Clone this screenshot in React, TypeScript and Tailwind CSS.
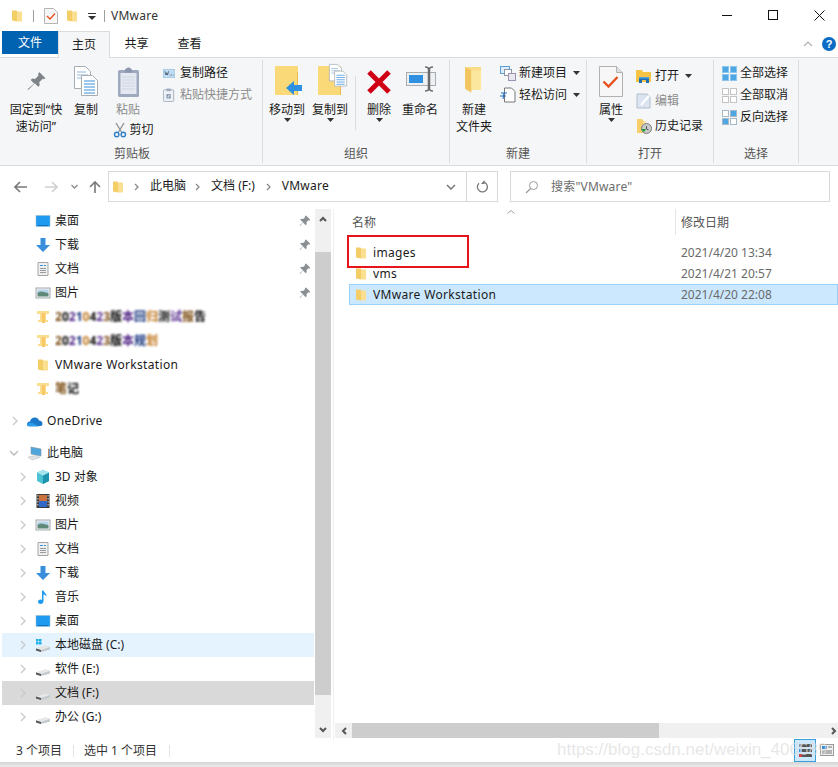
import React from "react";

const Sm = ({ children, w = 16, h = 16, vb, className = "" }: { children: React.ReactNode; w?: number; h?: number; vb?: string; className?: string }) => (
  <svg width={w} height={h} viewBox={vb ?? `0 0 ${w} ${h}`} className={"shrink-0 " + className}>{children}</svg>
);

const Folder = () => (
  <Sm>
    <path d="M3 2.500h4.500l.8 1.300V13.500L3 12.500z" fill="#f3cd66" />
    <path d="M8 3.500h5v10H8z" fill="#fadf90" />
  </Sm>
);
const PinFolder = () => (
  <Sm>
    <path d="M2 2h12v3h-3v6h2v2H3v-2h2V5H2z" fill="#fcdc8e" />
    <path d="M7 4h3v10H7z" fill="#f6c964" />
  </Sm>
);
const Desktop = () => (
  <Sm>
    <rect x="1" y="2.500" width="14" height="11" fill="#1e9bf0" stroke="#9ab9cc" strokeWidth=".5" />
    <path d="M3 12h10v1H3z" fill="#0d6fb8" />
  </Sm>
);
const Down = () => (
  <Sm>
    <path d="M5.500 1h5v7H15l-7 7-7-7h4.500z" fill="#3a8fdc" />
  </Sm>
);
const Doc = () => (
  <Sm>
    <path d="M3 1.500h10v13H3z" fill="#eef0f2" stroke="#a6a6a6" />
    <path d="M5 4h3v1H5zM9 4h2v1H9z" fill="#3a8fdc" />
    <path d="M5 7h6v1H5zM5 9h6v1H5zM5 11h6v1H5z" fill="#9a9a9a" />
  </Sm>
);
const Pic = () => (
  <Sm>
    <rect x="1" y="3" width="14" height="10" fill="#f1f3f5" stroke="#a4a8ad" />
    <path d="M2.500 4.500h11v3h-11z" fill="#b6d3ea" />
    <path d="M2.500 7.500l4-1 7 1.500v3.500h-11z" fill="#5f8a78" />
  </Sm>
);
const Cloud = () => (
  <Sm w={17} h={16}>
    <path d="M1 11.500c0-2 1.300-3 3-3 .6-2.500 2.500-4 4.800-4 2 0 3.600 1.300 4.200 3 2 0 3.500 1.500 3.500 3.200 0 1.300-.8 2.300-2 2.300H3c-1.300 0-2-.9-2-2z" fill="#1a78c8" />
    <path d="M1 11.500c.5-1 3-2 6-1.500l6 3.500H3c-1.300 0-2-.9-2-2z" fill="#2a9be8" />
  </Sm>
);
const PC = () => (
  <Sm w={17} h={16}>
    <path d="M5 2l10 2v7L5 9z" fill="#4fa6dc" stroke="#7d94a6" strokeWidth=".6" />
    <path d="M2 12l8-1.500 4 2L6 15z" fill="#dfe3e6" stroke="#b5b9bc" strokeWidth=".5" />
  </Sm>
);
const Cube = () => (
  <Sm>
    <path d="M8 1l6 2.500v8.500l-6 3-6-3V3.500z" fill="#4cc2d2" />
    <path d="M8 6.500l6-3v8.500l-6 3z" fill="#1d93ad" />
    <path d="M8 1l6 2.500-6 3-6-3z" fill="#a5e6ec" />
  </Sm>
);
const Film = () => (
  <Sm>
    <rect x="1.500" y="1" width="13" height="14" fill="#3a3a3a" />
    <path d="M4 2h8v6H4z" fill="#c9723f" />
    <path d="M4 8h8v6H4z" fill="#3068c8" />
    <path d="M2.500 2h.8v1.500h-.8zM2.500 5h.8v1.500h-.8zM2.500 8h.8v1.500h-.8zM2.500 11h.8v1.500h-.8zM12.700 2h.8v1.500h-.8zM12.700 5h.8v1.500h-.8zM12.700 8h.8v1.500h-.8zM12.700 11h.8v1.500h-.8z" fill="#fff" />
  </Sm>
);
const Note = () => (
  <Sm>
    <path d="M7 1.500h1.500c.3 2 3.500 3 3 6.500-.5-1.500-1.500-2.300-3-2.500V12c0 1.700-1.300 3-3 3S3 14 3 12.800c0-1.400 1.300-2.300 2.500-2.300.6 0 1.100.1 1.500.4z" fill="#1d9bf0" />
  </Sm>
);
const Drive = ({ win }: { win?: boolean }) => (
  <Sm>
    {win && <path d="M1 2h2.500v2.500H1zM4 2h2.500v2.500H4zM1 5h2.500v2.500H1zM4 5h2.500v2.500H4z" fill="#18aee8" />}
    <path d="M1 11.500l9.500-3 4.500 1.500v2.500L6 15l-5-1.500z" fill="#c5c8ca" />
    <path d="M1 11.500l9.500-3 4.500 1.500L6 13z" fill="#e6e8ea" />
    <path d="M1 11.500L6 13v2l-5-1.500z" fill="#555" />
  </Sm>
);
const Pin = () => (
  <svg width="12" height="12" viewBox="0 0 12 12" className="shrink-0">
    <path d="M7 .5l4.500 4.500-1.200.6-.8-.3-2 2 .2 2-1 1L4 7.600 1 11l-.5-.5L4 7.300 1.200 4.700l1-1 2 .2 2-2-.3-.8z" fill="#8a8f94" />
  </svg>
);
const Chevron = ({ open }: { open?: boolean }) => (
  <svg width="8" height="10" viewBox="0 0 8 10" className="shrink-0">
    {open ? <path d="M0 3l4 4 4-4" fill="none" stroke="#b9b9b9" strokeWidth="1.300" /> : <path d="M2 1l4 4-4 4" fill="none" stroke="#c9c9c9" strokeWidth="1.300" />}
  </svg>
);

const mosaic = ["text-[#7a4a10]", "text-[#000]", "text-[#4b1d80]", "text-[#12307a]", "text-[#c07820]", "text-[#111]", "text-[#5b2f90]"];
const Blurred = ({ text }: { text: string }) => (
  <span className="blur-[0.8px] font-bold">
    {text.split("").map((c, i) => (
      <span key={i} className={mosaic[i % mosaic.length]}>{c}</span>
    ))}
  </span>
);

type Row = { icon: React.ReactNode; label: React.ReactNode; pin?: boolean; bg?: string };

const NavRow = ({ icon, label, pin, bg = "", chev, mb = "" }: Row & { chev?: boolean; mb?: string }) => (
  <div className={"h-6 flex items-center pl-[17px] pr-[3px] " + bg + " " + mb}>
    <span className="w-[16px] shrink-0 flex">{chev && <Chevron />}</span>
    <span className="mr-[4px] flex">{icon}</span>
    <span className="flex-1 truncate">{label}</span>
    {pin && <Pin />}
  </div>
);

const Caret = ({ className = "" }: { className?: string }) => (
  <svg width="7" height="4" viewBox="0 0 7 4" className={"shrink-0 " + className}><path d="M0 0h7L3.500 4z" fill="#333" /></svg>
);

const Large = ({ icon, label, dim, caret, w }: { icon: React.ReactNode; label: React.ReactNode; dim?: boolean; caret?: boolean; w: string }) => (
  <div className={"flex flex-col items-center shrink-0 " + w}>
    <div className="h-[34px] flex items-start justify-center">{icon}</div>
    <div className={"text-center leading-[17px] whitespace-pre-line mt-[1px] " + (dim ? "text-[#8c8c8c]" : "")}>{label}</div>
    {caret && <Caret />}
  </div>
);

const Small = ({ icon, label, dim, caret }: { icon: React.ReactNode; label: string; dim?: boolean; caret?: boolean }) => (
  <div className="flex items-center h-[22px] whitespace-nowrap">
    <span className="w-[16px] flex justify-center mr-[3px]">{icon}</span>
    <span className={dim ? "text-[#8c8c8c]" : ""}>{label}</span>
    {caret && <Caret className="ml-[6px]" />}
  </div>
);

const Group = ({ w, label, children }: { w: string; label: string; children: React.ReactNode }) => (
  <div className={"flex flex-col shrink-0 border-r border-[#dcdddf] mt-[2px] h-[103px] " + w}>
    <div className="flex-1 flex pt-[6px] min-h-0">{children}</div>
    <div className="h-[20px] leading-[22px] text-center text-[#555]">{label}</div>
  </div>
);

const PinBig = () => (
  <svg width="21" height="22" viewBox="0 0 30 32">
    <path d="M19 3l9 9-2.500 1.500-1.500-.7-5 5 .7 4.200-2.200 2.200-5-5L3 29l-1-1 9.500-8.500-5-5 2.200-2.200 4.200.7 5-5-.7-1.500z" fill="#7f8488" />
  </svg>
);
const Pages = () => (
  <g>
    <path d="M.5.500h11l5 5v17H.5z" fill="#fff" stroke="#a8adb2" />
    <path d="M3 6h9M3 9h11M3 12h5" stroke="#8fb4dc" />
    <path d="M7.500 9.500h11l5 5v15h-16z" fill="#fff" stroke="#a8adb2" />
    <path d="M10 15h11M10 18h11M10 21h11M10 24h11M10 27h11" stroke="#3a8fdc" />
  </g>
);
const CopyBig = () => <svg width="25" height="31" viewBox="0 0 25 31"><Pages /></svg>;
const PasteBig = () => (
  <svg width="24" height="32" viewBox="0 0 24 32">
    <rect x="1" y="4" width="21" height="27" rx="1.500" fill="#9ea9bf" />
    <rect x="3.500" y="7" width="16" height="21" fill="#e4e9f1" />
    <path d="M5 11h13M5 14h13M5 17h13M5 20h13M5 23h13" stroke="#cfd6e2" />
    <path d="M8 4c0-1 1-1.500 1.500-1.500C10 1 13 1 13.500 2.500 14 2.500 15 3 15 4v2.500H8z" fill="#8b97ae" />
  </svg>
);
const Scissors = () => (
  <svg width="14" height="16" viewBox="0 0 14 16">
    <path d="M3 1l5.500 9M11 1L5.500 10" stroke="#8a8f94" strokeWidth="1.300" fill="none" />
    <circle cx="3.700" cy="12.500" r="2.200" fill="none" stroke="#2f7fc9" strokeWidth="1.400" />
    <circle cx="10.300" cy="12.500" r="2.200" fill="none" stroke="#2f7fc9" strokeWidth="1.400" />
  </svg>
);
const CopyPath = () => (
  <svg width="14" height="9" viewBox="0 0 16 12">
    <rect x=".5" y=".5" width="15" height="11" fill="#bfdcf3" stroke="#a0c4e0" />
    <path d="M2.500 3l1.500 5 1-3 1 3 1.500-5" fill="none" stroke="#3a4a5a" strokeWidth="1" />
    <path d="M9 8h1M11 8h1M13 8h1" stroke="#3a4a5a" />
  </svg>
);
const PasteShort = () => (
  <svg width="12" height="14" viewBox="0 0 14 16">
    <rect x=".5" y="2" width="12" height="13.500" rx="1" fill="#eef1f5" stroke="#9ea9bf" />
    <rect x="4" y=".5" width="5" height="3" fill="#9ea9bf" />
    <path d="M4 7h5v5H4z" fill="#7f93ad" />
    <path d="M6 11V9h2" stroke="#fff" fill="none" />
  </svg>
);
const BigFolder = ({ children }: { children?: React.ReactNode }) => (
  <svg width="24" height="30" viewBox="0 0 24 30" className="overflow-visible">
    <rect x="0" y="0" width="23" height="29" rx="1" fill="#f9d978" />
    <path d="M22 6h1v23h-1z" fill="#e8b94d" />
    {children}
  </svg>
);
const Del = () => (
  <svg width="26" height="26" viewBox="0 0 26 26">
    <path d="M3 3l20 20M23 3L3 23" stroke="#d00014" strokeWidth="5" />
  </svg>
);
const Rename = () => (
  <svg width="32" height="30" viewBox="0 0 32 30">
    <rect x=".5" y="8.500" width="29" height="13" fill="#eef1f3" stroke="#a8acb0" />
    <rect x="3" y="11" width="14" height="8" fill="#2f8fe0" />
    <path d="M19 3c2 0 3.500 0 3.500 2v20c0 2-1.500 2-3.500 2M27 3c-2 0-3.500 0-3.500 2v20c0 2 1.500 2 3.500 2" fill="none" stroke="#6a6a6a" strokeWidth="1.500" />
  </svg>
);
const NewFolderBig = () => (
  <svg width="22" height="30" viewBox="0 0 24 34">
    <path d="M2 1h18v26H8l-6-3z" fill="#f9dc86" />
    <path d="M2 1l7 4v25l-7-4z" fill="#f3c55e" />
    <path d="M9 5h11v22H9z" fill="#fce79f" />
  </svg>
);
const NewItem = () => (
  <svg width="16" height="16" viewBox="0 0 16 16">
    <rect x=".5" y="1.500" width="9" height="7" fill="#dfeefa" stroke="#5ba0d8" />
    <rect x="4.500" y="4.500" width="7" height="6" fill="#fff" stroke="#8a98a8" />
    <rect x="8.500" y="8.500" width="7" height="7" fill="#e8e8ee" stroke="#a090b0" />
  </svg>
);
const EasyAccess = () => (
  <svg width="16" height="16" viewBox="0 0 16 16">
    <path d="M4.500 1v14H15V4.500L11.500 1z" fill="#fff" stroke="#777" />
    <path d="M1 6h6M0 9h6M3 12l1-6" stroke="#1f6fc0" />
  </svg>
);
const Props = () => (
  <svg width="24" height="31" viewBox="0 0 24 31">
    <path d="M.5.500h17l6 6v24H.5z" fill="#f7f7f7" stroke="#b2b2b2" />
    <path d="M17.500.5v6h6" fill="#e0e0e0" stroke="#b2b2b2" />
    <path d="M4.500 15.500l5 5 9-9.500" fill="none" stroke="#e8501f" strokeWidth="2.400" />
  </svg>
);
const OpenI = () => (
  <svg width="16" height="14" viewBox="0 0 16 14">
    <path d="M0 1h6l1 2h8v10H0z" fill="#f5c445" />
    <path d="M3 8h10v6h-3v-3H6v3H3z" fill="#1f6fb5" />
    <path d="M3 8h10v1.500H3z" fill="#4fa1e0" />
  </svg>
);
const EditI = () => (
  <svg width="16" height="16" viewBox="0 0 16 16">
    <path d="M1 1h10l3 3v11H1z" fill="#dbe4f0" stroke="#b3bfcc" />
    <path d="M5 12l8-9" stroke="#fff" strokeWidth="2" />
  </svg>
);
const History = () => (
  <svg width="16" height="16" viewBox="0 0 16 16">
    <path d="M1 1h5l1.500 2v12H1z" fill="#f6ce6a" />
    <path d="M7 3h3v8H7z" fill="#fbe29a" />
    <circle cx="10.500" cy="10.500" r="5" fill="#c9c9c9" stroke="#7d7d7d" />
    <path d="M5 11l3 3 2-3H8.500z" fill="#1f9a3a" />
    <path d="M10.500 8v3l2 1" stroke="#555" fill="none" />
  </svg>
);
const Grid4 = ({ tl, tr, bl, br, stroke }: { tl: string; tr: string; bl: string; br: string; stroke: string }) => (
  <svg width="15" height="15" viewBox="0 0 15 15">
    <rect x=".5" y=".5" width="6" height="6" fill={tl} stroke={stroke} />
    <rect x="8.500" y=".5" width="6" height="6" fill={tr} stroke={stroke} />
    <rect x=".5" y="8.500" width="6" height="6" fill={bl} stroke={stroke} />
    <rect x="8.500" y="8.500" width="6" height="6" fill={br} stroke={stroke} />
  </svg>
);

const VScrollArrow = ({ d }: { d: string }) => (
  <svg width="8" height="6" viewBox="0 0 8 6"><path d={d} fill="none" stroke="#555" strokeWidth="2" /></svg>
);

const FileRow = ({ name, date, selected }: { name: string; date: string; selected?: boolean }) => (
  <div className={"h-[21px] flex items-center border " + (selected ? "bg-[#cce8ff] border-[#99d1ff]" : "border-transparent")}>
    <span className="ml-[3px] mr-[4px] flex"><Folder /></span>
    <span className="w-[308px] truncate tracking-[0.33px]">{name}</span>
    <span className="text-[#6a6a6a]">{date}</span>
  </div>
);

const AddrChev = ({ className }: { className: string }) => (
  <svg width="6" height="8" viewBox="0 0 6 8" className={className}><path d="M1 1l3 3-3 3" fill="none" stroke="#8a8a8a" strokeWidth="1.300" /></svg>
);

export default function App() {
  return (
    <div className="w-[838px] h-[767px] bg-white flex flex-col overflow-hidden text-[12px] text-[#1a1a1a] relative font-['Noto_Sans','Noto_Sans_CJK_SC',sans-serif]">
      {/* title bar */}
      <div className="h-[31px] flex items-center shrink-0 pl-[9px]">
        <Folder />
        <span className="w-px h-[12px] bg-[#a0a0a0] ml-[8px] mr-[10px]" />
        <svg width="14" height="16" viewBox="0 0 14 16"><path d="M.5.500h9l4 4v11H.5z" fill="#f7f7f7" stroke="#b5b5b5" /><path d="M3 8l3 3 5-5.500" fill="none" stroke="#e8501f" strokeWidth="1.400" /></svg>
        <span className="ml-[6px]"><Folder /></span>
        <svg width="8" height="7" viewBox="0 0 8 7" className="ml-[8px] mt-[2px]"><path d="M0 0h8v1H0zM0 3h8L4 7z" fill="#333" /></svg>
        <span className="w-px h-[12px] bg-[#a0a0a0] ml-[8px] mr-[6px]" />
        <span className="text-[12px] text-[#333] tracking-[0.25px] pt-[1px]">VMware</span>
        <div className="ml-auto flex items-center pr-[13px] gap-[35px]">
          <svg width="11" height="11" viewBox="0 0 11 11"><path d="M0 5.500h10" stroke="#111" /></svg>
          <svg width="11" height="11" viewBox="0 0 11 11"><rect x=".5" y=".5" width="9" height="9" fill="none" stroke="#111" /></svg>
          <svg width="11" height="11" viewBox="0 0 11 11"><path d="M.5.500l10 10M10.500.5l-10 10" stroke="#111" /></svg>
        </div>
      </div>
      {/* tabs */}
      <div className="h-[27px] flex shrink-0 border-b border-[#dadbdc] pl-[2px]">
        <div className="w-[56px] h-[23px] bg-[#0063b1] text-white flex items-center justify-center">文件</div>
        <div className="w-[52px] h-[27px] bg-[#f5f6f7] border border-b-0 border-[#dadbdc] flex items-center justify-center">主页</div>
        <div className="w-[53px] flex items-center justify-center">共享</div>
        <div className="w-[53px] flex items-center justify-center">查看</div>
        <div className="ml-auto flex items-center pr-[2px] gap-[9px]">
          <svg width="10" height="6" viewBox="0 0 10 6"><path d="M1 5l4-4 4 4" fill="none" stroke="#b0b0b0" strokeWidth="1.200" /></svg>
          <div className="w-[14px] h-[14px] rounded-full bg-[#0a6cc4] text-white text-[11px] font-bold flex items-center justify-center font-['Liberation_Sans',sans-serif]">?</div>
        </div>
      </div>
      {/* ribbon */}
      <div className="h-[108px] shrink-0 bg-[#f5f6f7] border-b border-[#dadbdc] flex pl-[2px]">
        <Group w="w-[261px]" label="剪贴板">
          <Large w="w-[68px]" icon={<div className="mt-[4px]"><PinBig /></div>} label={"固定到“快\n速访问”"} />
          <Large w="w-[34px] ml-[-1px]" icon={<CopyBig />} label="复制" />
          <div className="flex flex-col items-center w-[46px] ml-[3px]">
            <div className="h-[34px]"><PasteBig /></div>
            <div className="leading-[17px] mt-[1px] text-[#8c8c8c] mr-[2px]">粘贴</div>
            <div className="flex items-center gap-[3px] mt-[3px] ml-[8px] whitespace-nowrap"><Scissors />剪切</div>
          </div>
          <div className="ml-[9px] flex flex-col mt-[-4px]">
            <Small icon={<CopyPath />} label="复制路径" />
            <Small icon={<PasteShort />} label="粘贴快捷方式" dim />
          </div>
        </Group>
        <Group w="w-[187px]" label="组织">
          <Large w="w-[42px] ml-[3px]" icon={
            <BigFolder><path d="M11 22l8-7v4h8v6h-8v4z" fill="#2f8fe0" /></BigFolder>
          } label="移动到" caret />
          <Large w="w-[42px] ml-[1px]" icon={
            <BigFolder><g transform="translate(11 -2) scale(.75)"><Pages /></g></BigFolder>
          } label="复制到" caret />
          <div className="w-px h-[54px] bg-[#dcdddf] mt-[10px] ml-[4px]" />
          <Large w="w-[42px] ml-[2px]" icon={<div className="mt-[3px]"><Del /></div>} label="删除" caret />
          <Large w="w-[42px] ml-[-1px]" icon={<div className="mt-[-2px] ml-[4px]"><Rename /></div>} label="重命名" />
        </Group>
        <Group w="w-[137px]" label="新建">
          <Large w="w-[48px]" icon={<NewFolderBig />} label={"新建\n文件夹"} />
          <div className="flex flex-col ml-[2px] mt-[-4px]">
            <Small icon={<NewItem />} label="新建项目" caret />
            <Small icon={<EasyAccess />} label="轻松访问" caret />
          </div>
        </Group>
        <Group w="w-[127px]" label="打开">
          <Large w="w-[36px] ml-[6px]" icon={<Props />} label="属性" caret />
          <div className="flex flex-col ml-[7px] mt-[-1px] gap-[3px]">
            <Small icon={<OpenI />} label="打开" caret />
            <Small icon={<EditI />} label="编辑" dim />
            <Small icon={<History />} label="历史记录" />
          </div>
        </Group>
        <Group w="w-[85px]" label="选择">
          <div className="flex flex-col pl-[7px] mt-[-4px]">
            <Small icon={<Grid4 tl="#4ea6e4" tr="#4ea6e4" bl="#4ea6e4" br="#4ea6e4" stroke="#8cc4ec" />} label="全部选择" />
            <Small icon={<Grid4 tl="#fff" tr="#fff" bl="#fff" br="#fff" stroke="#c4c4c4" />} label="全部取消" />
            <Small icon={<Grid4 tl="#fff" tr="#4ea6e4" bl="#4ea6e4" br="#fff" stroke="#a8b8c4" />} label="反向选择" />
          </div>
        </Group>
      </div>
      {/* address */}
      <div className="h-[43px] shrink-0 flex items-center pl-[14px] pr-[8px] pb-[2px]">
        <svg width="14" height="12" viewBox="0 0 14 12"><path d="M6 1L1 6l5 5M1 6h12" fill="none" stroke="#7a7a7a" strokeWidth="1.600" /></svg>
        <svg width="14" height="12" viewBox="0 0 14 12" className="ml-[16px]"><path d="M8 1l5 5-5 5M13 6H1" fill="none" stroke="#d0d0d0" strokeWidth="1.600" /></svg>
        <svg width="7" height="5" viewBox="0 0 7 5" className="ml-[13px]"><path d="M.5 1l3 3 3-3" fill="none" stroke="#8a8a8a" strokeWidth="1.300" /></svg>
        <svg width="12" height="14" viewBox="0 0 12 14" className="ml-[11px]"><path d="M6 13V2M1 7l5-5 5 5" fill="none" stroke="#7a7a7a" strokeWidth="1.600" /></svg>
        <div className="ml-[7px] w-[390px] h-[31px] border border-[#d9d9d9] flex items-center">
          <span className="ml-[1px] flex"><Folder /></span>
          <AddrChev className="ml-[8px] mr-[10px]" />
          <span className="mt-[-1px]">此电脑</span>
          <AddrChev className="ml-[9px] mr-[10px]" />
          <span className="mt-[-1px]">文档 (F:)</span>
          <AddrChev className="ml-[11px] mr-[10px]" />
          <span className="mt-[-1px] tracking-[0.25px]">VMware</span>
          <svg width="10" height="6" viewBox="0 0 10 6" className="ml-auto mr-[10px]"><path d="M1 1l4 4 4-4" fill="none" stroke="#777" strokeWidth="1.500" /></svg>
          <div className="w-[31px] h-full border-l border-[#d9d9d9] flex items-center justify-center">
            <svg width="12" height="13" viewBox="0 0 12 13"><path d="M3 3.200a5 5 0 1 0 5-1" fill="none" stroke="#777" strokeWidth="1.300" /><path d="M8.500 0v4H5z" fill="#777" /></svg>
          </div>
        </div>
        <div className="ml-[12px] flex-1 h-[31px] border border-[#d9d9d9] flex items-center text-[#6d6d6d]">
          <svg width="14" height="14" viewBox="0 0 14 14" className="ml-[14px] mr-[12px]"><circle cx="8.500" cy="5.500" r="4" fill="none" stroke="#999" /><path d="M5.500 8.500L1 13" stroke="#999" strokeWidth="1.200" /></svg>
          <span className="tracking-[0.2px]">搜索"VMware"</span>
        </div>
      </div>
      {/* main */}
      <div className="flex-1 flex min-h-0 relative">
        <div className="w-[314px] mr-[1px] shrink-0 pl-[2px] overflow-hidden">
          <NavRow icon={<Desktop />} label="桌面" pin />
          <NavRow icon={<Down />} label="下载" pin />
          <NavRow icon={<Doc />} label="文档" pin />
          <NavRow icon={<Pic />} label="图片" pin />
          <NavRow icon={<PinFolder />} label={<Blurred text="20210423版本回归测试报告" />} />
          <NavRow icon={<PinFolder />} label={<Blurred text="20210423版本规划" />} />
          <NavRow icon={<Folder />} label={<span className="tracking-[0.33px]">VMware Workstation</span>} />
          <NavRow icon={<PinFolder />} label={<Blurred text="笔记" />} mb="mb-[8px]" />
          <div className="h-6 flex items-center pl-[9px] mb-[8px]">
            <span className="w-[15px] flex"><Chevron /></span>
            <span className="mr-[4px] flex"><Cloud /></span><span className="tracking-[0.3px]">OneDrive</span>
          </div>
          <div className="h-6 flex items-center pl-[8px]">
            <span className="w-[16px] flex"><Chevron open /></span>
            <span className="mr-[4px] flex"><PC /></span>此电脑
          </div>
          <NavRow chev icon={<Cube />} label="3D 对象" />
          <NavRow chev icon={<Film />} label="视频" />
          <NavRow chev icon={<Pic />} label="图片" />
          <NavRow chev icon={<Doc />} label="文档" />
          <NavRow chev icon={<Down />} label="下载" />
          <NavRow chev icon={<Note />} label="音乐" />
          <NavRow chev icon={<Desktop />} label="桌面" />
          <NavRow chev icon={<Drive win />} label="本地磁盘 (C:)" bg="bg-[#e5f3ff]" />
          <NavRow chev icon={<Drive />} label="软件 (E:)" />
          <NavRow chev icon={<Drive />} label="文档 (F:)" bg="bg-[#d9d9d9]" />
          <NavRow chev icon={<Drive />} label="办公 (G:)" />
        </div>
        {/* vertical scrollbar */}
        <div className="w-[16px] shrink-0 bg-[#f0f0f0] flex flex-col mb-[2px]">
          <div className="h-[43px] flex justify-center pt-[7px]"><VScrollArrow d="M1 5l3-3 3 3" /></div>
          <div className="h-[443px] bg-[#cdcdcd]" />
          <div className="flex-1 flex justify-center items-end pb-[5px]"><VScrollArrow d="M1 1l3 3 3-3" /></div>
        </div>
        {/* file list */}
        <div className="flex-1 flex flex-col min-w-0 ml-[2px] border-l border-[#f0f0f0] pl-[1px]">
          <div className="h-[26px] shrink-0 flex relative pt-[5px]">
            <span className="ml-[17px] w-[323px] text-[#555]">名称</span>
            <span className="w-px h-[26px] bg-[#e5e5e5] mt-[-5px] mr-[5px]" />
            <span className="text-[#555]">修改日期</span>
            <svg width="8" height="4" viewBox="0 0 8 4" className="absolute left-[172px] top-[1px]"><path d="M.5 3.500L4 .5l3.500 3" fill="none" stroke="#a0a0a0" /></svg>
          </div>
          <div className="flex-1 min-h-0 pt-[7px] pl-[14px]">
            <FileRow name="images" date="2021/4/20 13:34" />
            <FileRow name="vms" date="2021/4/21 20:57" />
            <FileRow name="VMware Workstation" date="2021/4/20 22:08" selected />
          </div>
          <div className="h-[15px] shrink-0 mb-[2px] bg-[#f0f0f0] flex">
            <div className="w-[17px] flex items-center justify-center">
              <svg width="6" height="8" viewBox="0 0 6 8"><path d="M5 1L2 4l3 3" fill="none" stroke="#555" strokeWidth="2" /></svg>
            </div>
            <div className="w-[307px] bg-[#cdcdcd]" />
            <div className="flex-1 flex items-center justify-end pr-[1px]">
              <svg width="6" height="8" viewBox="0 0 6 8"><path d="M1 1l3 3-3 3" fill="none" stroke="#555" strokeWidth="2" /></svg>
            </div>
          </div>
        </div>
        {/* red annotation */}
        <div className="absolute left-[347px] top-[26px] w-[122px] h-[33px] border-2 border-[#e8141c]" />
      </div>
      {/* status */}
      <div className="h-[22px] shrink-0 flex items-center pl-[16px] text-[#333] relative">
        <span className="w-[57px]">3 个项目</span>
        <span className="w-px h-[12px] bg-[#e4e4e4]" />
        <span className="ml-[10px] w-[85px]">选中 1 个项目</span>
        <span className="w-px h-[12px] bg-[#e4e4e4]" />
        <div className="absolute left-[794px] top-[-1px] w-[22px] h-[23px] bg-[#cce8ff] border border-[#3ba0d8] flex flex-col justify-center gap-[2px] pl-[4px]">
          <span className="w-[13px] h-[3px] border-l-[3px] border-[#999] bg-[#555]" />
          <span className="w-[13px] h-[3px] border-l-[3px] border-[#3a8fdc] bg-[#555]" />
          <span className="w-[13px] h-[3px] border-l-[3px] border-[#d04040] bg-[#555]" />
        </div>
        <svg width="14" height="12" viewBox="0 0 14 12" className="absolute left-[820px] top-[4px]"><rect x=".5" y=".5" width="13" height="11" fill="#f0f0f0" stroke="#999" /><path d="M2 2h5v3H2z" fill="#3a8fdc" /><path d="M8 3h4M2 7h10M2 9h10" stroke="#777" /></svg>
        <div className="absolute left-[557px] top-[-1px] text-[17px] leading-[22px] text-[#dcdcdc]/70 whitespace-nowrap font-['Liberation_Sans',sans-serif]">https://blog.csdn.net/weixin_406689</div>
      </div>
      <div className="h-[5px] shrink-0 bg-gradient-to-b from-[#d4d4d4] to-[#ececec]" />
    </div>
  );
}
